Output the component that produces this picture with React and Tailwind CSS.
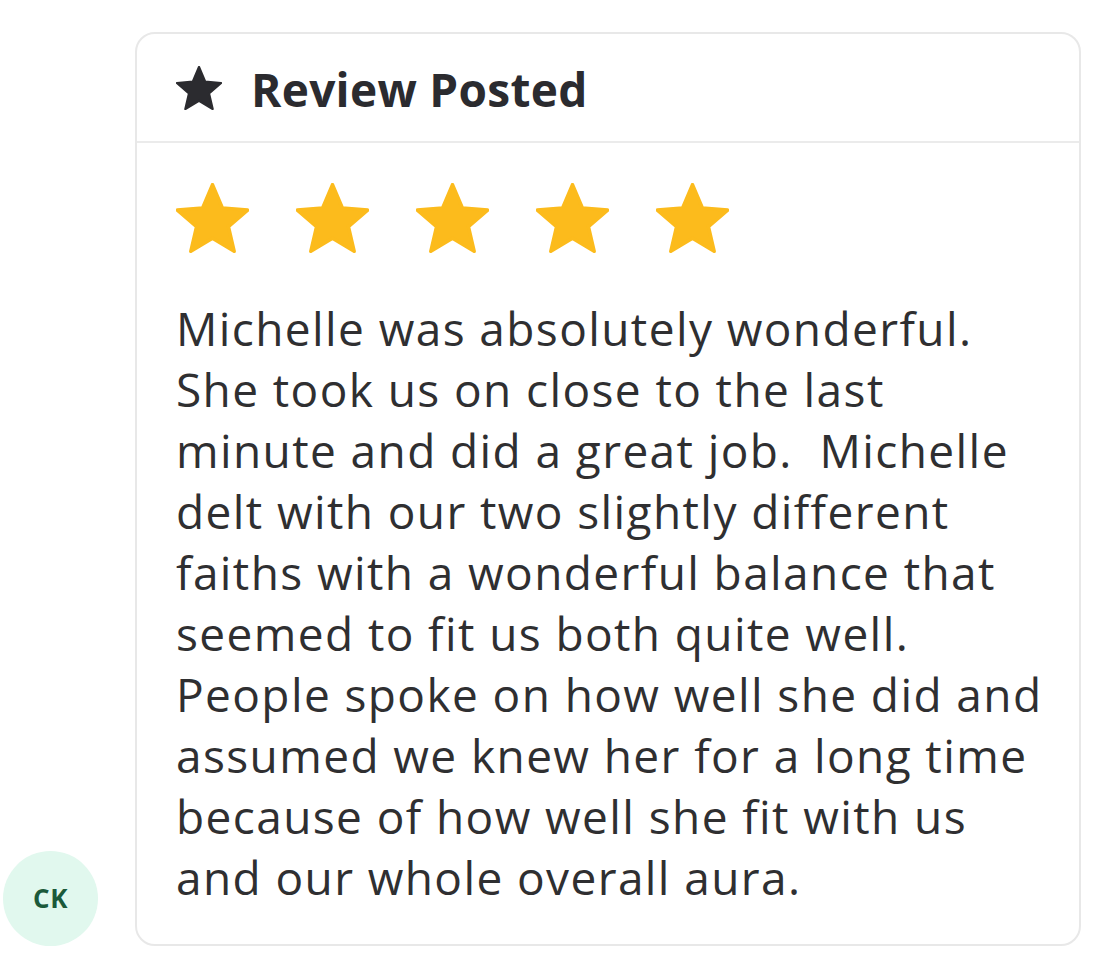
import React from 'react'

const lines = [
  'Michelle was absolutely wonderful.',
  'She took us on close to the last',
  'minute and did a great job.\u00a0 Michelle',
  'delt with our two slightly different',
  'faiths with a wonderful balance that',
  'seemed to fit us both quite well.',
  'People spoke on how well she did and',
  'assumed we knew her for a long time',
  'because of how well she fit with us',
  'and our whole overall aura.',
]

function Star({ className }) {
  return (
    <svg viewBox="1.6 1.6 20.8 19.8" className={className} fill="currentColor" stroke="currentColor" strokeWidth="1" strokeLinejoin="round">
      <path d="M12 17.27L18.18 21l-1.64-7.03L22 9.24l-7.19-.61L12 2 9.19 8.63 2 9.24l5.46 4.73L5.82 21z" />
    </svg>
  )
}

export default function App() {
  return (
    <div className="min-h-[959px] bg-white pt-8 pl-[3px] pr-6 flex items-start gap-[37px] font-['Open_Sans',sans-serif]">
      {/* Avatar */}
      <div className="self-end mb-[13px] w-[95px] h-[95px] shrink-0 rounded-full bg-[#e1f8ee] flex items-center justify-center">
        <span className="text-[26px] font-bold text-[#1b5a3a] tracking-wide">CK</span>
      </div>

      {/* Review card */}
      <div className="w-[946px] h-[914px] rounded-[20px] border-2 border-[#e8e8e8] bg-white">
        <div className="h-[109px] px-[39px] flex items-center gap-[29px] border-b-2 border-[#ebebeb]">
          <Star className="w-[46px] h-[44px] text-[#2b2b2f]" />
          <h1 className="mt-[4px] text-[46px] font-bold tracking-[0.3px] text-[#2b2b2f]">Review Posted</h1>
        </div>

        <div className="pt-[40px] px-[39px]">
          <div className="flex gap-[47px] mb-[45px]">
            {[0, 1, 2, 3, 4].map((i) => (
              <Star key={i} className="w-[73px] h-[70px] text-[#fcbb1c]" />
            ))}
          </div>
          <p className="text-[46px] leading-[61px] tracking-[1.4px] text-[#2f2f31] whitespace-nowrap">
            {lines.map((l, i) => (
              <React.Fragment key={i}>
                {l}
                {i < lines.length - 1 && <br />}
              </React.Fragment>
            ))}
          </p>
        </div>
      </div>
    </div>
  )
}
